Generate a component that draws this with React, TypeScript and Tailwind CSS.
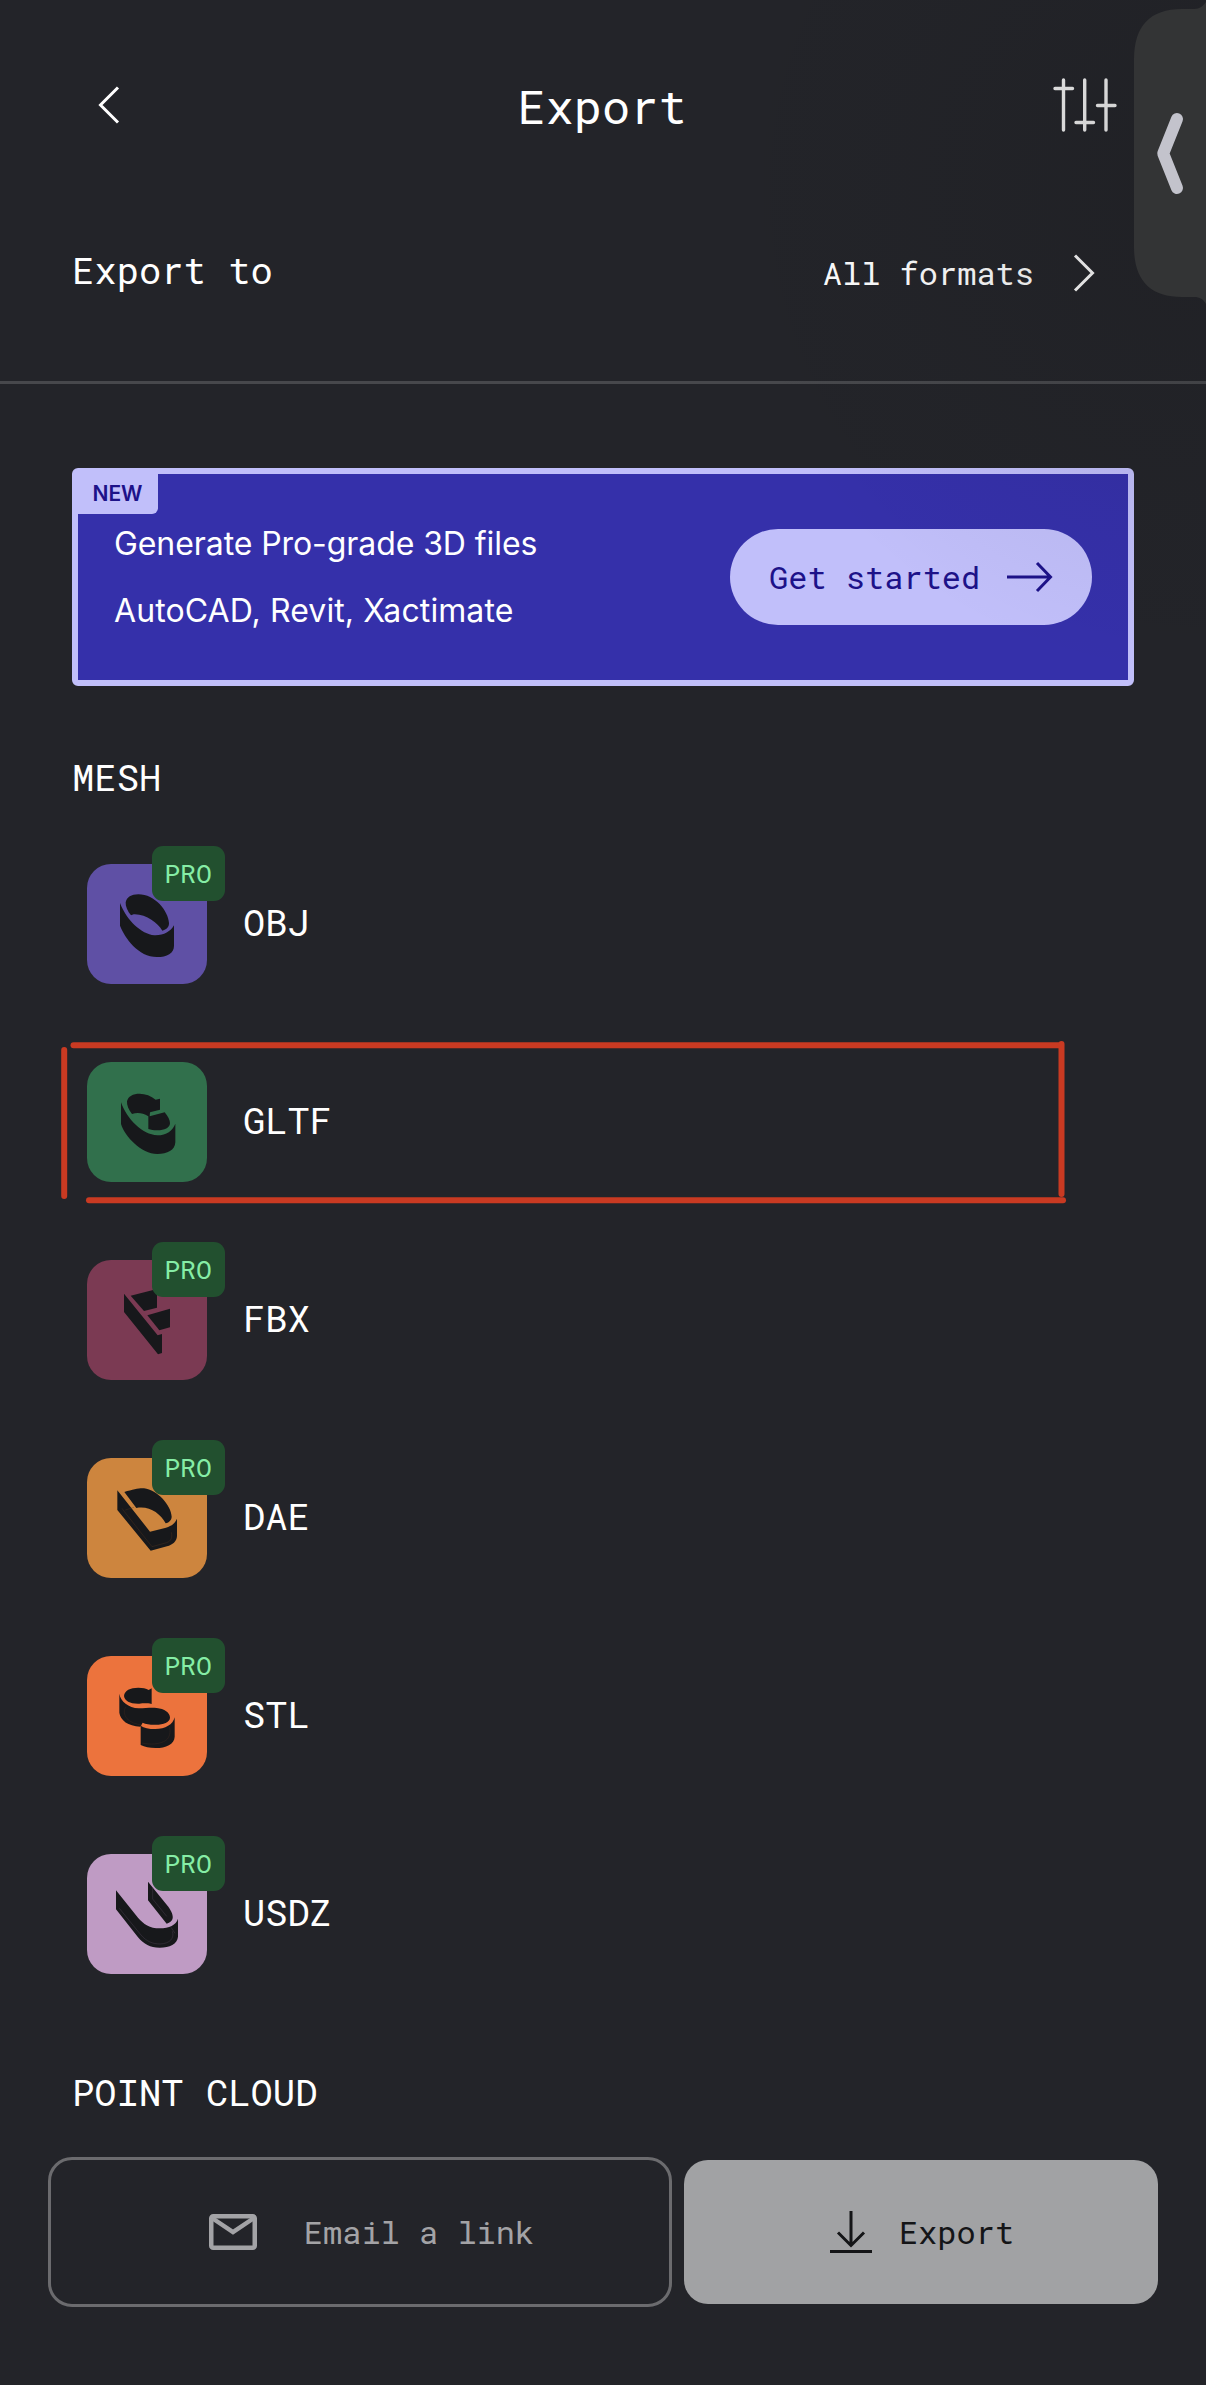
import type { ReactNode } from 'react';

type Format = {
  name: string;
  tile: string;
  viewBox: string;
  pro?: boolean;
  highlighted?: boolean;
  glyph: ReactNode;
};

const MONO = "font-['Roboto_Mono','DejaVu_Sans_Mono',monospace]";

const formats: Format[] = [
  {
    name: 'OBJ',
    tile: 'bg-[#5f50a5]',
    viewBox: '81 102 360 360',
    pro: true,
    glyph: (
      <>
        <path d="M197 217C200 201 214 193 235 193C285 193 325 243 327 279C327 290 323 297 307 302C294 279 257 251 221 253L213 256C203 244 196 230 197 217Z" />
        <path d="M180 219C200 271 244 312 283 316C311 317 331 305 342 286V347C342 370 321 381 291 381C235 381 194 323 180 287Z" />
      </>
    ),
  },
  {
    name: 'GLTF',
    tile: 'bg-[#31704c]',
    viewBox: '111 96 360 360',
    highlighted: true,
    glyph: (
      <>
        <path d="M231 214C234 199 249 191 269 191C286 191 303 197 317 209L330 206V239L300 247L299 259L344 247C354 259 360 270 360 280C359 294 344 301 322 301C310 301 303 299 295 297V259C277 248 262 247 246 252C236 240 230 226 231 214Z" />
        <path d="M213 217C231 268 277 314 322 316C350 316 368 302 376 281V337C375 361 352 372 322 372C273 371 225 320 213 282Z" />
      </>
    ),
  },
  {
    name: 'FBX',
    tile: 'bg-[#7b3a53]',
    viewBox: '81 90 360 360',
    pro: true,
    glyph: (
      <>
        <path d="M212 197L291 177V233L252 243Z" />
        <path d="M262 256L330 236V292L298 301Z" />
        <path d="M192 191L293 316L306 312V369L294 373L192 246Z" />
      </>
    ),
  },
  {
    name: 'DAE',
    tile: 'bg-[#cd853e]',
    viewBox: '81 84 360 360',
    pro: true,
    glyph: (
      <>
        <path d="M193 186C220 178 237 174 252 175C292 179 334 227 335 260C335 269 328 277 317 280C300 250 269 227 229 234Z" />
        <path d="M172 181L270 305L318 293C335 288 345 280 351 266V318C350 335 338 344 321 349L272 362L172 240Z" />
        <path d="M186 235L194 246L276 350L320 338C333 333 338 323 334 307M196 240L222 232" fill="none" stroke="#5a3b20" strokeWidth="1" />
      </>
    ),
  },
  {
    name: 'STL',
    tile: 'bg-[#ec733d]',
    viewBox: '81 93 360 360',
    pro: true,
    glyph: (
      <>
        <path d="M192 213C194 196 210 188 235 188C248 188 258 190 266 195L275 190V237C259 234 251 235 238 236C211 237 194 228 192 213Z" />
        <path d="M178 206C182 230 205 248 236 250C257 250 272 247 290 249C313 251 330 263 330 278C329 293 308 300 283 299C269 299 257 297 248 293L241 305C204 303 181 286 178 263Z" />
        <path d="M242 302C252 309 266 312 286 312C316 312 339 299 344 277V335C343 358 318 369 287 369C268 369 254 366 242 360Z" />
        <path d="M198 246C190 254 192 270 201 281C211 292 228 298 246 300M328 305C333 321 329 337 318 346C300 358 269 360 246 354" fill="none" stroke="#4a2d22" strokeWidth="1" />
      </>
    ),
  },
  {
    name: 'USDZ',
    tile: 'bg-[#bf9bc4]',
    viewBox: '81 102 360 360',
    pro: true,
    glyph: (
      <>
        <path d="M264 185L325 260C335 274 340 287 338 295C337 303 330 308 320 311L264 241Z" />
        <path d="M168 211L234 293C250 312 270 325 299 325C328 325 348 315 354 296V350C352 372 329 383 299 383C270 383 252 373 234 352L168 268Z" />
        <path d="M278 202V237L320 289M178 265L243 345C259 364 278 372 300 372C330 371 344 354 337 334M333 322L345 340" fill="none" stroke="#5c4c61" strokeWidth="1" />
      </>
    ),
  },
];

/** Hand-drawn style frame around a single row. */
function Highlight() {
  return (
    <svg
      className="pointer-events-none absolute top-[-24px] left-[-30px]"
      width="1014"
      height="172"
      viewBox="57 1038 1014 172"
      fill="none"
      stroke="#c93a22"
      strokeWidth="6"
      strokeLinecap="round"
    >
      <path d="M73.500 1045.200H1061" />
      <path d="M64.200 1050V1196" />
      <path d="M89 1200.200H1063" />
      <path d="M1061.500 1044V1194" />
    </svg>
  );
}

function FormatRow({ format }: { format: Format }) {
  return (
    <li className="relative flex h-[120px] items-center gap-9">
      <div className={`relative size-[120px] rounded-[24px] ${format.tile}`}>
        <svg className="size-full" viewBox={format.viewBox} fill="#17181b">
          {format.glyph}
        </svg>
        {format.pro && (
          <span className={`${MONO} absolute top-[-18px] left-[65px] flex h-[55px] w-[73px] items-center justify-center rounded-[11px] bg-[#22502f] pr-px text-[26.500px] leading-none text-[#86eda6]`}>
            PRO
          </span>
        )}
      </div>
      <span className={`${MONO} pb-[6px] text-[37px] leading-none`}>{format.name}</span>
      {format.highlighted && <Highlight />}
    </li>
  );
}

export default function App() {
  return (
    <div className={`${MONO} relative flex h-[2385px] w-[1206px] flex-col overflow-hidden bg-[#232429] text-white`}>
      <header className="grid h-[210px] grid-cols-[1fr_auto_1fr] items-center pr-[89px] pl-[97px]">
        <svg width="24" height="40" viewBox="0 0 24 40" fill="none" stroke="white" strokeWidth="3">
          <path d="M21 2.500L3.500 20L21 37.500" />
        </svg>
        <h1 className="pt-[3px] pr-[10px] text-[47px] leading-none">Export</h1>
        <svg className="justify-self-end" width="64" height="56" viewBox="0 0 64 56" fill="none" stroke="#f4f4f4" strokeWidth="3.400" strokeLinecap="round">
          <path d="M10.500 3V53M31.700 3V53M53 3V53M2 11.500H19.500M23 45.500H40.500M44.500 28.500H62" />
        </svg>
      </header>

      <section className="flex h-[174px] items-center justify-between border-b-[3px] border-[#47484c] pr-[110px] pb-[45px] pl-[72px]">
        <h2 className="pb-[6px] text-[37.200px] leading-none">Export to</h2>
        <div className="flex items-center gap-[38px] text-[32px] leading-none">
          All formats
          <svg width="24" height="40" viewBox="0 0 24 40" fill="none" stroke="white" strokeWidth="3">
            <path d="M3 2.500L20.500 20L3 37.500" />
          </svg>
        </div>
      </section>

      <main className="flex flex-col px-[72px] pt-[84px]">
        <section className="relative flex h-[218px] items-center justify-between rounded-[6px] border-[6px] border-[#c1bffa] bg-[#3530aa] pr-9 pl-[36px] font-['Inter',sans-serif]">
          <span className="absolute top-[-1px] left-[-1px] flex h-[41px] w-[81px] items-center justify-center rounded-br-[6px] bg-[#c1bffa] text-[21px] leading-none font-semibold text-[#1d1289]">
            NEW
          </span>
          <p className="text-[32px] leading-[67px]">
            <span className="tracking-[-0.080px]">Generate Pro-grade 3D files</span>
            <br />
            <span className="tracking-[0.100px]">AutoCAD, Revit, Xactimate</span>
          </p>
          <button className={`${MONO} flex h-24 w-[362px] items-center justify-between rounded-full bg-[#c1bffa] pr-[39px] pl-[39px] text-[32px] leading-none text-[#1d1289]`}>
            Get started
            <svg width="47" height="32" viewBox="0 0 47 32" fill="none" stroke="currentColor" strokeWidth="3">
              <path d="M1 16H44M31 2L44.500 16L31 30" />
            </svg>
          </button>
        </section>

        <h2 className="mt-[69px] h-11 text-[37.200px] leading-[44px]">MESH</h2>
        <ul className="mt-[65px] flex flex-col gap-[78px] pl-[15px]">
          {formats.map((format) => (
            <FormatRow key={format.name} format={format} />
          ))}
        </ul>
        <h2 className="mt-[96px] h-11 text-[37.200px] leading-[44px]">POINT CLOUD</h2>
      </main>

      <footer className="mt-[43px] flex items-center gap-3 px-12 text-[32px] leading-none">
        <button className="flex h-[150px] w-[624px] items-center justify-center gap-[47px] rounded-[24px] border-[3px] border-[#6b6b6e] pl-[23px] text-[#a3a3a6]">
          <svg width="48" height="36" viewBox="0 0 48 36" fill="none" stroke="currentColor" strokeWidth="4.500">
            <rect x="2.250" y="2.250" width="43.500" height="31.500" rx="2" />
            <path d="M3 4L24 18L45 4" />
          </svg>
          Email a link
        </button>
        <button className="flex h-36 w-[474px] items-center justify-center gap-[27px] rounded-[24px] bg-[#a1a2a4] pl-[2px] text-[#141517]">
          <svg width="42" height="42" viewBox="0 0 42 42" fill="none" stroke="currentColor" strokeWidth="3">
            <path d="M21 0V35M8 21.500L21 34.500L34 21.500M0 40.500H42" />
          </svg>
          Export
        </button>
      </footer>

      <div className="pointer-events-none absolute top-0 right-0 h-[700px] w-[500px] bg-[radial-gradient(circle_at_500px_190px,rgba(20,20,22,0.200),rgba(20,20,22,0.100)_200px,rgba(20,20,22,0.040)_340px,transparent_490px)]" />
      <aside className="absolute top-0 right-0">
        <svg width="72" height="310" viewBox="0 0 72 310" fill="none">
          <path d="M0 59C0 26 16 9 48 9H60C66 9 69 6 72 2V304C69 299 66 297 60 297H48C16 297 0 280 0 247Z" fill="#333435" />
          <path d="M43 119L29.200 153.500L43 188" stroke="#c3c3cc" strokeWidth="12" strokeLinecap="round" strokeLinejoin="round" />
        </svg>
      </aside>
    </div>
  );
}
